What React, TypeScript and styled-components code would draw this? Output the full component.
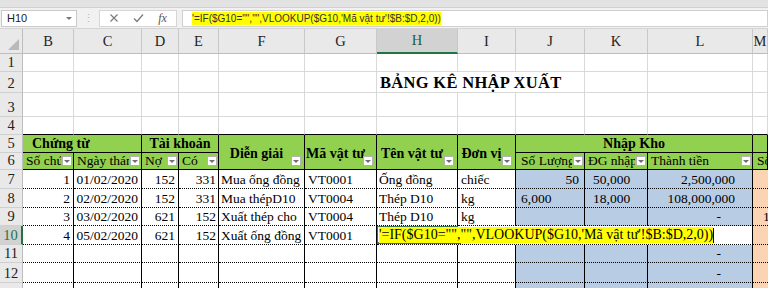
import React from 'react';
import styled, {createGlobalStyle} from 'styled-components';

const GRID = '1px solid #d9d9d9';
const SOLID = '1px solid #000';
const DOT = '1px dotted #000';
const GREEN = '#92d050';
const BLUE = '#b8cce4';
const PEACH = '#fbd4b4';
const SERIF = '"Liberation Serif", "Times New Roman", serif';
const SANS = '"Liberation Sans", Arial, sans-serif';

const GlobalStyle = createGlobalStyle`
    html, body {
        margin: 0;
        padding: 0;
        background: #fff;
    }
    body {
        width: 768px;
        height: 288px;
        overflow: hidden;
    }
`;

const Window = styled.div`
    width: 768px;
    height: 288px;
    overflow: hidden;
    display: flex;
    flex-direction: column;
    background: #fff;
`;

const TopStrip = styled.div`
    height: 7px;
    flex: none;
    background: #e2e2e2;
    border-bottom: 1px solid #d0d0d0;
`;

const FormulaBar = styled.div`
    height: 20px;
    flex: none;
    display: flex;
    align-items: center;
    background: #f1f1f1;
    border-bottom: 1px solid #d4d4d4;
`;

const NameBox = styled.div`
    width: 76px;
    height: 17px;
    margin-left: 1px;
    box-sizing: border-box;
    background: #fff;
    border: 1px solid #c9c9c9;
    display: flex;
    align-items: center;
    justify-content: space-between;
    padding: 0 4px 0 5px;
    font-family: ${SANS};
    font-size: 11px;
    color: #222;
`;

const Caret = styled.span`
    width: 0;
    height: 0;
    border-left: 3px solid transparent;
    border-right: 3px solid transparent;
    border-top: 3px solid #777;
`;

const Dots = styled.div`
    width: 22px;
    text-align: center;
    color: #b5b5b5;
    font-family: ${SANS};
    font-size: 11px;
`;

const IconBox = styled.div`
    width: 78px;
    height: 17px;
    box-sizing: border-box;
    background: #fff;
    border: 1px solid #d6d6d6;
    display: flex;
    align-items: center;
    justify-content: space-around;
    padding: 0 2px;
`;

const Fx = styled.span`
    font-family: ${SERIF};
    font-style: italic;
    font-size: 12px;
    color: #555;
`;

const FormulaInput = styled.div`
    flex: 1;
    height: 17px;
    margin-left: 5px;
    box-sizing: border-box;
    background: #fff;
    border: 1px solid #d0d0d0;
    display: flex;
    align-items: center;
    padding-left: 9px;
`;

const FormulaText = styled.span`
    background: #ffff00;
    font-family: ${SANS};
    font-size: 10px;
    color: #333;
    line-height: 13px;
    white-space: pre;
`;

const Sheet = styled.div`
    display: grid;
    grid-template-columns: 23px 51px 68px 37px 40px 86px 72px 81px 58px 69px 63px 105px 1fr;
    grid-template-rows: 25px 18px 21px 24px 18px 18px 17px 19px 19px 18px 19px 18px 20px 20px;
`;

const ColHead = styled.div<{$c: number; $active?: boolean}>`
    grid-column: ${(p) => p.$c};
    grid-row: 1;
    box-sizing: border-box;
    background: ${(p) => (p.$active ? '#d2d2d2' : '#e9e9e9')};
    border-right: 1px solid #c8c8c8;
    border-bottom: ${(p) => (p.$active ? '2px solid #217346' : '1px solid #bdbdbd')};
    display: flex;
    align-items: center;
    justify-content: center;
    font-family: ${SERIF};
    font-size: 14.5px;
    color: ${(p) => (p.$active ? '#1e5e3a' : '#222')};
`;

const Corner = styled.div`
    grid-column: 1;
    grid-row: 1;
    background: #e9e9e9;
    border-right: 1px solid #bdbdbd;
    border-bottom: 1px solid #bdbdbd;
    position: relative;

    &::after {
        content: '';
        position: absolute;
        right: 3px;
        bottom: 3px;
        border-left: 11px solid transparent;
        border-bottom: 11px solid #b9b9b9;
    }
`;

const RowHead = styled.div<{$r: number; $active?: boolean}>`
    grid-column: 1;
    grid-row: ${(p) => p.$r};
    box-sizing: border-box;
    background: ${(p) => (p.$active ? '#d2d2d2' : '#e9e9e9')};
    border-right: ${(p) => (p.$active ? '2px solid #217346' : '1px solid #bdbdbd')};
    border-bottom: 1px solid #cfcfcf;
    display: flex;
    align-items: flex-end;
    justify-content: center;
    font-family: ${SERIF};
    font-size: 14.5px;
    line-height: 17px;
    color: ${(p) => (p.$active ? '#217346' : '#222')};
`;

type Align = 'left' | 'right' | 'center';

const Cell = styled.div<{
    $c: number;
    $r: number;
    $cs?: number;
    $rs?: number;
    $bg?: string;
    $rb?: string;
    $bb?: string;
    $align?: Align;
    $valign?: 'center' | 'bottom';
    $bold?: boolean;
    $pad?: string;
    $size?: number;
}>`
    grid-column: ${(p) => p.$c} / span ${(p) => p.$cs ?? 1};
    grid-row: ${(p) => p.$r} / span ${(p) => p.$rs ?? 1};
    box-sizing: border-box;
    min-width: 0;
    position: relative;
    background: ${(p) => p.$bg ?? '#fff'};
    border-right: ${(p) => p.$rb ?? GRID};
    border-bottom: ${(p) => p.$bb ?? GRID};
    display: flex;
    align-items: ${(p) => (p.$valign === 'center' ? 'center' : 'flex-end')};
    justify-content: ${(p) => (p.$align === 'right' ? 'flex-end' : p.$align === 'center' ? 'center' : 'flex-start')};
    padding: ${(p) => p.$pad ?? '0 2px'};
    font-family: ${SERIF};
    font-size: ${(p) => p.$size ?? 13.5}px;
    font-weight: ${(p) => (p.$bold ? 700 : 400)};
    line-height: 17px;
    color: #000;
    white-space: nowrap;
    overflow: hidden;
`;

const Label = styled.span`
    flex: 1;
    min-width: 0;
    overflow: hidden;
`;

const FilterBtn = styled.span<{$float?: boolean}>`
    flex: none;
    width: 10px;
    height: 10px;
    margin: 0 0 3px 1px;
    box-sizing: border-box;
    background: #fff;
    border: 1px solid #b2b2b2;
    position: ${(p) => (p.$float ? 'absolute' : 'relative')};
    right: ${(p) => (p.$float ? '3px' : 'auto')};
    bottom: ${(p) => (p.$float ? '0' : 'auto')};

    &::after {
        content: '';
        position: absolute;
        left: 1px;
        top: 3px;
        border-left: 3px solid transparent;
        border-right: 3px solid transparent;
        border-top: 3px solid #707070;
    }
`;

const Title = styled.span`
    font-family: ${SERIF};
    font-size: 16.5px;
    font-weight: 700;
    letter-spacing: 0.3px;
`;

const EditText = styled.span`
    position: relative;
    z-index: 2;
    background: #ffff00;
    font-size: 14px;
    line-height: 16px;
    margin-bottom: 1px;
    white-space: pre;
`;

const TextCaret = styled.span`
    position: relative;
    z-index: 2;
    width: 1px;
    height: 15px;
    margin-bottom: 1px;
    background: #000;
`;

const ActiveOutline = styled.span`
    position: absolute;
    left: -1px;
    top: -1px;
    width: 82px;
    height: 19px;
    box-sizing: border-box;
    border: 2px solid #3d7355;
    border-right: none;
    z-index: 1;

    &::after {
        content: '';
        position: absolute;
        right: -3px;
        bottom: -3px;
        width: 5px;
        height: 5px;
        background: #3d7355;
    }
`;

const COLS = ['B', 'C', 'D', 'E', 'F', 'G', 'H', 'I', 'J', 'K', 'L', 'M'];

interface ColSpec {
    align: Align;
    pad: string;
}

// B..L alignment for the data rows
const SPEC: ColSpec[] = [
    {align: 'right', pad: '0 3px'},
    {align: 'right', pad: '0 3px'},
    {align: 'right', pad: '0 3px'},
    {align: 'right', pad: '0 2px'},
    {align: 'left', pad: '0 2px'},
    {align: 'left', pad: '0 3px'},
    {align: 'left', pad: '0 2px'},
    {align: 'left', pad: '0 3px'},
    {align: 'right', pad: '0 5px'},
    {align: 'left', pad: '0 8px'},
    {align: 'right', pad: '0 17px'},
];

type Val = string | {t: string; align: Align; pad: string};

const DASH = {t: '-', align: 'right' as Align, pad: '0 31px'};

const DATA: Val[][] = [
    ['1', '01/02/2020', '152', '331', 'Mua ống đồng', 'VT0001', 'Ống đồng', 'chiếc', '50', '50,000', '2,500,000'],
    ['2', '02/02/2020', '152', '331', 'Mua thépD10', 'VT0004', 'Thép D10', 'kg', {t: '6,000', align: 'left', pad: '0 5px'}, '18,000', '108,000,000'],
    ['3', '03/02/2020', '621', '152', 'Xuất thép cho', 'VT0004', 'Thép D10', 'kg', '', '', DASH],
    ['4', '05/02/2020', '621', '152', 'Xuất ống đồng', 'VT0001'],
    ['', '', '', '', '', '', '', '', '', '', DASH],
    ['', '', '', '', '', '', '', '', '', '', DASH],
    ['', '', '', '', '', '', '', '', '', '', ''],
];

const EDIT_TEXT = '\'=IF($G10="","",VLOOKUP($G10,\'Mã vật tư\'!$B:$D,2,0))';

const XIcon = () => (
    <svg width='10' height='10' viewBox='0 0 10 10'>
        <path d='M1.5 1.5 L8.5 8.5 M8.5 1.5 L1.5 8.5' stroke='#7b7b7b' strokeWidth='1.2'/>
    </svg>
);

const CheckIcon = () => (
    <svg width='11' height='10' viewBox='0 0 11 10'>
        <path d='M1 5.5 L4 8.5 L10 1.5' fill='none' stroke='#7b7b7b' strokeWidth='1.3'/>
    </svg>
);

const headerRow5 = () => [
    <Cell key='b5' $c={2} $r={6} $cs={2} $bg={GREEN} $rb={SOLID} $bb={SOLID} $bold $size={14} $pad='0 0 0 9px'>Chứng từ</Cell>,
    <Cell key='d5' $c={4} $r={6} $cs={2} $bg={GREEN} $rb={SOLID} $bb={SOLID} $bold $size={14} $align='center'>Tài khoản</Cell>,
    ...[
        {c: 6, t: 'Diễn giải'},
        {c: 7, t: 'Mã vật tư'},
        {c: 8, t: 'Tên vật tư'},
        {c: 9, t: 'Đơn vị'},
    ].map((h) => (
        <Cell key={`t${h.c}`} $c={h.c} $r={6} $rs={2} $bg={GREEN} $rb={SOLID} $bb={SOLID} $bold $size={14} $align='center' $valign='center' $pad='2px 10px 0 0'>
            {h.t}
            <FilterBtn $float/>
        </Cell>
    )),
    <Cell key='j5' $c={10} $r={6} $cs={3} $bg={GREEN} $rb={SOLID} $bb={SOLID} $bold $size={14} $align='center'>Nhập Kho</Cell>,
    <Cell key='m5' $c={13} $r={6} $bg={GREEN} $rb={SOLID} $bb={SOLID}/>,
];

const headerRow6 = () => [
    {c: 2, t: 'Số chứng từ'},
    {c: 3, t: 'Ngày tháng'},
    {c: 4, t: 'Nợ'},
    {c: 5, t: 'Có'},
    {c: 10, t: 'Số Lượng'},
    {c: 11, t: 'ĐG nhập'},
    {c: 12, t: 'Thành tiền'},
].map((h) => (
    <Cell key={`h6${h.c}`} $c={h.c} $r={7} $bg={GREEN} $rb={SOLID} $bb={SOLID} $pad={h.c === 10 ? '0 1px 0 5px' : '0 1px 0 3px'}>
        <Label>{h.t}</Label>
        <FilterBtn/>
    </Cell>
)).concat(
    <Cell key='m6' $c={13} $r={7} $bg={GREEN} $rb={SOLID} $bb={SOLID} $pad='0 0 0 4px'>Số Lượng</Cell>,
);

const dataRows = () => DATA.flatMap((row, i) => {
    const r = i + 8;
    const cells: React.ReactNode[] = [];
    const isEdit = i === 3;
    const cols = isEdit ? 6 : 11;
    for (let k = 0; k < cols; k++) {
        const v = row[k] ?? '';
        const spec = typeof v === 'string' ? SPEC[k] : v;
        const text = typeof v === 'string' ? v : v.t;
        cells.push(
            <Cell
                key={`d${r}-${k}`}
                $c={k + 2}
                $r={r}
                $bg={k >= 8 ? BLUE : '#fff'}
                $rb={SOLID}
                $bb={DOT}
                $align={spec.align}
                $pad={spec.pad}
            >
                {text}
            </Cell>,
        );
    }
    if (isEdit) {
        cells.push(
            <Cell key={`edit${r}`} $c={8} $r={r} $cs={5} $rb={SOLID} $bb={DOT} $pad='0 0 0 2px'>
                <ActiveOutline/>
                <EditText>{EDIT_TEXT}</EditText>
                <TextCaret/>
            </Cell>,
        );
    }
    cells.push(
        <Cell key={`m${r}`} $c={13} $r={r} $bg={PEACH} $rb='none' $bb={DOT} $pad='0 0 0 10px'>
            {i === 2 ? '1' : ''}
        </Cell>,
    );
    return cells;
});

const emptyTop = () => {
    const cells: React.ReactNode[] = [];
    for (let r = 2; r <= 5; r++) {
        for (let k = 0; k < COLS.length; k++) {
            if (r === 3 && k >= 6 && k <= 8) {
                continue;
            }
            cells.push(
                <Cell key={`e${r}-${k}`} $c={k + 2} $r={r} $bb={r === 5 ? SOLID : GRID}/>,
            );
        }
    }
    cells.push(
        <Cell key='title' $c={8} $r={3} $cs={3} $pad='0 0 1px 3px'>
            <Title>BẢNG KÊ NHẬP XUẤT</Title>
        </Cell>,
    );
    return cells;
};

export default function App() {
    return (
        <Window>
            <GlobalStyle/>
            <TopStrip/>
            <FormulaBar>
                <NameBox>
                    H10
                    <Caret/>
                </NameBox>
                <Dots>⋮</Dots>
                <IconBox>
                    <XIcon/>
                    <CheckIcon/>
                    <Fx>fx</Fx>
                </IconBox>
                <FormulaInput>
                    <FormulaText>{EDIT_TEXT}</FormulaText>
                </FormulaInput>
            </FormulaBar>
            <Sheet>
                <Corner/>
                {COLS.map((c, k) => (
                    <ColHead key={c} $c={k + 2} $active={c === 'H'}>{c}</ColHead>
                ))}
                {Array.from({length: 13}, (_, i) => (
                    <RowHead key={i} $r={i + 2} $active={i + 1 === 10}>{i + 1}</RowHead>
                ))}
                {emptyTop()}
                {headerRow5()}
                {headerRow6()}
                {dataRows()}
            </Sheet>
        </Window>
    );
}
